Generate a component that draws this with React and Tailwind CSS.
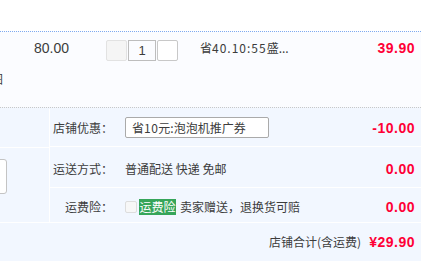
import React from 'react';

const cn = '"Noto Sans CJK SC", "Microsoft YaHei", sans-serif';
const num = '"Liberation Sans", Arial, sans-serif';

const Row = ({ label, children, amount, className }) => (
    <div className={`flex items-center border-b border-white ${className}`}>
        <div className="w-[63px] shrink-0 text-right">{label}</div>
        <div className="ml-[12px] flex items-center flex-1">{children}</div>
        <div
            className="pr-[6px] text-[14px] font-bold tracking-[0.5px] text-[#ff0036]"
            style={{ fontFamily: num }}
        >
            {amount}
        </div>
    </div>
);

export default function App() {
    return (
        <div
            className="w-[431px] h-[261px] overflow-hidden bg-white text-[12px] leading-[14px] text-[#3c3c3c]"
            style={{ fontFamily: cn }}
        >
            <div className="w-[421px]">
                <div className="h-[31px]" />

                {/* item row */}
                <div className="h-[76px] border-t border-dotted border-[#7eaaf0] bg-[#fbfcff] flex items-start pt-[9px]">
                    <div className="w-[34px] shrink-0 overflow-hidden">
                        <div className="mt-[31px] -ml-[9px] leading-[14px]">图</div>
                    </div>
                    <div className="w-[72px] shrink-0 text-[14px]" style={{ fontFamily: num }}>
                        80.00
                    </div>
                    <div className="flex gap-[1px] -mt-[1px] shrink-0">
                        <div className="w-[21px] h-[21px] rounded-[2px] border border-[#e2e2e2] bg-[#f5f5f5]" />
                        <div
                            className="w-[28px] h-[21px] border border-[#bdbdbd] flex items-center justify-center text-[13px]"
                            style={{ fontFamily: num }}
                        >
                            1
                        </div>
                        <div className="w-[21px] h-[21px] rounded-[2px] border border-[#c8c8c8] bg-white" />
                    </div>
                    <div className="ml-[22px]">
                        省<span className="tracking-[1px]">40.10:55</span>盛...
                    </div>
                    <div
                        className="ml-auto pr-[6px] text-[14px] font-bold tracking-[0.5px] text-[#ff0036]"
                        style={{ fontFamily: num }}
                    >
                        39.90
                    </div>
                </div>

                {/* order details */}
                <div className="border-t border-dotted border-[#c8c8c8] bg-[#f2f7ff] pt-[1px]">
                    <div className="flex border-b border-white">
                        <div className="w-[50px] shrink-0 border-r border-white">
                            <div className="h-[39px] border-b border-white" />
                            <div className="mt-[11px] -ml-[200px] w-[207px] h-[35px] rounded-[3px] border border-[#c4c4c4] bg-white" />
                        </div>
                        <div className="flex-1">
                            <Row label="店铺优惠：" amount="-10.00" className="h-[38px]">
                                <div className="w-[144px] h-[21px] rounded-[2px] border border-[#aaaaaa] bg-white pl-[6px] flex items-center">
                                    省<span className="tracking-[0.5px]">10</span>元:泡泡机推广券
                                </div>
                            </Row>
                            <Row label="运送方式：" amount="0.00" className="h-[41px] pt-[3px]">
                                普通配送 快递 免邮
                            </Row>
                            <Row label="运费险：" amount="0.00" className="h-[34px] pt-[4px] border-b-0">
                                <div className="w-[12px] h-[12px] rounded-[2px] border border-[#dddddd] bg-[#f7f7f7]" />
                                <div className="ml-[2px] w-[37px] h-[16px] bg-[#36a55a] text-white flex items-center justify-center">
                                    运费险
                                </div>
                                <div className="ml-[4px]">卖家赠送，退换货可赔</div>
                            </Row>
                        </div>
                    </div>
                    <div className="h-[40px] flex items-center justify-end pr-[6px] pb-[2px]">
                        <span>店铺合计(含运费)</span>
                        <span
                            className="ml-[8px] text-[14px] font-bold tracking-[0.5px] text-[#ff0036]"
                            style={{ fontFamily: num }}
                        >
                            ¥29.90
                        </span>
                    </div>
                </div>
            </div>
        </div>
    );
}
